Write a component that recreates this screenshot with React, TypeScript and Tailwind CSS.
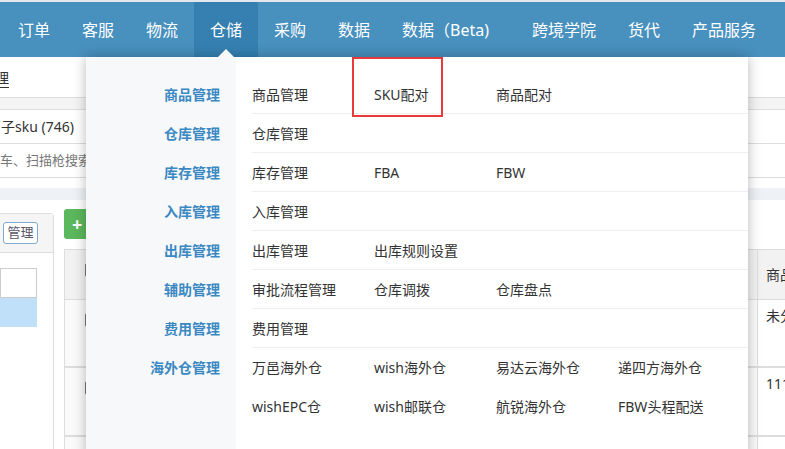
import React from "react";

const navItems = ["订单", "客服", "物流", "仓储", "采购", "数据"];
const navRight = ["跨境学院", "货代", "产品服务"];

const groups: { label: string; rows: string[][] }[] = [
  { label: "商品管理", rows: [["商品管理", "SKU配对", "商品配对"]] },
  { label: "仓库管理", rows: [["仓库管理"]] },
  { label: "库存管理", rows: [["库存管理", "FBA", "FBW"]] },
  { label: "入库管理", rows: [["入库管理"]] },
  { label: "出库管理", rows: [["出库管理", "出库规则设置"]] },
  { label: "辅助管理", rows: [["审批流程管理", "仓库调拨", "仓库盘点"]] },
  { label: "费用管理", rows: [["费用管理"]] },
  {
    label: "海外仓管理",
    rows: [
      ["万邑海外仓", "wish海外仓", "易达云海外仓", "递四方海外仓"],
      ["wishEPC仓", "wish邮联仓", "航锐海外仓", "FBW头程配送"],
    ],
  },
];

function Checkbox() {
  return <span className="ml-[20px] mt-[13px] block h-[14px] w-[14px] rounded-[2px] border border-[#777] bg-white" />;
}

export default function App() {
  return (
    <div className="relative h-[449px] w-[785px] overflow-hidden bg-white font-['Noto_Sans','Noto_Sans_CJK_SC',sans-serif] text-[#333]">
      {/* top nav */}
      <div className="h-[2px] bg-[#e4e8ec]" />
      <nav className="flex h-[55px] bg-[#4890be] pl-[2px] text-[16px] text-white">
        {navItems.map((n) => (
          <div
            key={n}
            className={
              "flex w-[64px] items-center justify-center " + (n === "仓储" ? "bg-[#3580b1]" : "")
            }
          >
            {n}
          </div>
        ))}
        <div className="flex w-[130px] items-center pl-4">数据（Beta)</div>
        {navRight.map((n) => (
          <div key={n} className="flex items-center px-4">
            {n}
          </div>
        ))}
      </nav>

      {/* page behind the menu */}
      <div className="flex h-[41px] items-center border-b border-[#ddd] text-[14px]">
        <span className="-ml-[19px] underline underline-offset-4">管理</span>
      </div>
      <div className="h-[12px] border-b border-[#ddd] bg-[#f4f4f4]" />
      <div className="flex h-[34px] items-center border-b border-[#ddd] pl-[1px] text-[14px]">子sku (746)</div>
      <div className="flex h-[34px] items-center border-b border-[#ddd] whitespace-nowrap text-[13px] text-[#777]">车、扫描枪搜索</div>
      <div className="h-[10px]" />
      <div className="h-[12px] bg-[#eef1f5]" />

      <div className="flex">
        <div className="mt-[13px] h-[240px] w-[54px] shrink-0 rounded-tr-[4px] border-r border-t border-[#ddd]">
          <div className="flex h-[39px] items-center border-b border-[#ddd] bg-[#f5f5f5] pl-[3px]">
            <span className="flex h-[22px] w-[35px] items-center justify-center rounded-[3px] border border-[#82a9cf] bg-white text-[13px] text-[#556]">
              管理
            </span>
          </div>
          <div className="pt-[15px]">
            <div className="h-[30px] w-[37px] border border-[#ccc]" />
            <div className="h-[29px] w-[37px] bg-[#bfe0f8]" />
          </div>
        </div>
        <div className="ml-[10px] flex-1">
          <div className="mt-[9px] flex h-[30px] w-[40px] items-center rounded-[3px] bg-[#5cb85c] pl-[8px] text-[18px] font-bold text-white">
            +
          </div>
          <div className="mt-[10px] border-l border-t border-[#ddd]">
            <div className="flex h-[50px] border-b border-[#ddd] bg-[#f2f2f2]">
              <div className="w-[692px] shrink-0">
                <Checkbox />
              </div>
              <div className="flex flex-1 items-center whitespace-nowrap border-l border-[#ddd] pl-[8px] text-[14px]">商品</div>
            </div>
            <div className="flex h-[68px] border-b-2 border-[#ddd] bg-[#fafafa]">
              <div className="w-[692px] shrink-0">
                <Checkbox />
              </div>
              <div className="flex-1 whitespace-nowrap border-l border-[#ddd] bg-white pl-[8px] pt-[5px] text-[14px]">未分组</div>
            </div>
            <div className="flex h-[69px] border-b-2 border-[#ddd] bg-[#fafafa]">
              <div className="w-[692px] shrink-0">
                <Checkbox />
              </div>
              <div className="flex-1 whitespace-nowrap border-l border-[#ddd] bg-white pl-[8px] pt-[5px] text-[14px]">1111</div>
            </div>
            <div className="flex h-[40px] bg-[#fafafa]">
              <div className="w-[692px] shrink-0">
                <Checkbox />
              </div>
              <div className="flex-1 border-l border-[#ddd] bg-white" />
            </div>
          </div>
        </div>
      </div>

      {/* dropdown menu */}
      <div className="absolute left-[218px] top-[49px] z-20 h-0 w-0 border-x-[8px] border-b-[8px] border-x-transparent border-b-[#f7f8fa]" />
      <div className="absolute left-[86px] top-[57px] z-10 flex h-[400px] w-[662px] bg-white shadow-[0_0_12px_rgba(0,0,0,0.28)]">
        <div className="w-[150px] shrink-0 bg-[#f7f8fa] pt-[18px]">
          {groups.map((g) => (
            <div key={g.label} className="flex h-[39px] items-center justify-end pr-4 text-[14px] font-bold text-[#3b89c2]">
              {g.label}
            </div>
          ))}
        </div>
        <div className="flex-1 pl-4 pt-[18px]">
          {groups.map((g, gi) =>
            gi < groups.length - 1 ? (
              <div key={g.label} className="flex h-[39px] items-center border-b border-[#eee] text-[14px]">
                {g.rows[0].map((t) => (
                  <span key={t} className="w-[122px] shrink-0">
                    {t}
                  </span>
                ))}
              </div>
            ) : (
              <div key={g.label}>
                {g.rows.map((r, ri) => (
                  <div key={ri} className="flex h-[39px] items-center text-[14px]">
                    {r.map((t) => (
                      <span key={t} className="w-[122px] shrink-0">
                        {t}
                      </span>
                    ))}
                  </div>
                ))}
              </div>
            )
          )}
        </div>
      </div>

      {/* highlight annotation */}
      <div className="absolute left-[352px] top-[57px] z-30 h-[60px] w-[91px] border-2 border-[#e8393b]" />
    </div>
  );
}
